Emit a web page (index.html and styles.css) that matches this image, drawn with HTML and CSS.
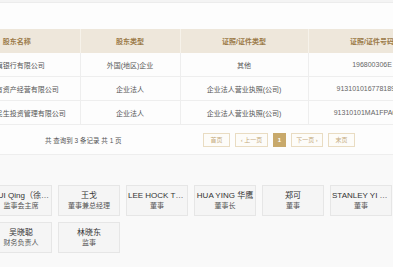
FILE: index.html
```html
<!DOCTYPE html>
<html lang="zh-CN">
<head>
<meta charset="utf-8">
<link rel="stylesheet" href="styles.css">
</head>
<body>
<div class="top-strip"></div>
<section class="panel">
  <table class="holders">
    <colgroup>
      <col class="c1"><col class="c2"><col class="c3"><col class="c4">
    </colgroup>
    <thead>
      <tr><th>股东名称</th><th>股东类型</th><th>证照/证件类型</th><th>证照/证件号码</th></tr>
    </thead>
    <tbody>
      <tr><td>花旗银行有限公司</td><td>外国(地区)企业</td><td>其他</td><td class="num">196800306E</td></tr>
      <tr><td>上海国有资产经营有限公司</td><td>企业法人</td><td>企业法人营业执照(公司)</td><td class="num">91310101677818906X</td></tr>
      <tr><td>上海张江民生投资管理有限公司</td><td>企业法人</td><td>企业法人营业执照(公司)</td><td class="num">91310101MA1FPA0G8K</td></tr>
    </tbody>
  </table>
  <div class="pagination">
    <div class="info">共 查询到 3 条记录 共 1 页</div>
    <div class="pager">
      <span class="pg w27">首页</span>
      <span class="pg w33">‹ 上一页</span>
      <span class="pg cur">1</span>
      <span class="pg w32">下一页 ›</span>
      <span class="pg w27">末页</span>
    </div>
  </div>
</section>
<section class="people">
  <div class="card"><div class="name">HUI Qing（徐慧青）</div><div class="role">监事会主席</div></div>
  <div class="card"><div class="name">王戈</div><div class="role">董事兼总经理</div></div>
  <div class="card"><div class="name">LEE HOCK TECK</div><div class="role">董事</div></div>
  <div class="card"><div class="name">HUA YING 华鹰</div><div class="role">董事长</div></div>
  <div class="card"><div class="name">郑可</div><div class="role">董事</div></div>
  <div class="card"><div class="name">STANLEY YI CHANG</div><div class="role">董事</div></div>
  <div class="card"><div class="name">吴晓聪</div><div class="role">财务负责人</div></div>
  <div class="card"><div class="name">林晓东</div><div class="role">监事</div></div>
</section>
</body>
</html>
```

FILE: styles.css
```css
html, body {
  margin: 0;
  padding: 0;
}
body {
  width: 393px;
  height: 267px;
  overflow: hidden;
  background: #f9f9f9;
  font-family: "Liberation Sans", "Noto Sans CJK SC", sans-serif;
  color: #555;
}
.top-strip {
  height: 2px;
  background: #f4f4f4;
  border-bottom: 1px solid #ececec;
}
.panel {
  background: #fdfdfd;
  padding-top: 26px;
  border-bottom: 1px solid #eeeeee;
  overflow: hidden;
}
.holders {
  margin-left: -46px;
  width: 482px;
  border-collapse: collapse;
  table-layout: fixed;
  font-size: 7px;
}
.c1 { width: 126px; }
.c2 { width: 100px; }
.c3 { width: 128px; }
.c4 { width: 128px; }
.holders th {
  height: 24px;
  padding: 0;
  background: #eee7db;
  color: #9b7a48;
  font-weight: bold;
  text-align: center;
  border-right: 1px solid #f6f2ea;
  white-space: nowrap;
}
.holders td {
  height: 23px;
  padding: 0;
  text-align: center;
  color: #555;
  border-right: 1px solid #eeeeee;
  border-bottom: 1px solid #eeeeee;
  white-space: nowrap;
  overflow: visible;
}
.holders td.num {
  color: #666;
}
.pagination {
  height: 29px;
  display: grid;
  grid-template-columns: 203px 1fr;
  align-items: center;
}
.info {
  padding-left: 45px;
  font-size: 6.5px;
  color: #555;
  white-space: nowrap;
}
.pager {
  display: flex;
  gap: 5px;
  align-items: center;
}
.pg {
  box-sizing: border-box;
  height: 14px;
  border: 1px solid #e9dcc2;
  color: #c4aa7c;
  font-size: 6px;
  display: flex;
  align-items: center;
  justify-content: center;
  background: #fdfcf9;
  white-space: nowrap;
}
.w27 { width: 27px; }
.w33 { width: 33px; }
.w32 { width: 32px; }
.pg.cur {
  width: 13px;
  background: #c8a96b;
  border-color: #c8a96b;
  color: #fff;
  font-weight: bold;
}
.people {
  padding-top: 30px;
  margin-left: -10px;
  display: grid;
  grid-template-columns: repeat(6, 62px);
  column-gap: 6px;
  row-gap: 6px;
}
.card {
  box-sizing: border-box;
  height: 31px;
  background: #f5f5f5;
  border: 1px solid #e6e6e6;
  padding: 5px 1px 0;
  text-align: center;
}
.name {
  font-size: 8px;
  line-height: 10px;
  color: #333;
  white-space: nowrap;
  overflow: hidden;
  text-overflow: ellipsis;
}
.role {
  font-size: 7px;
  line-height: 10px;
  color: #555;
  white-space: nowrap;
}
```
